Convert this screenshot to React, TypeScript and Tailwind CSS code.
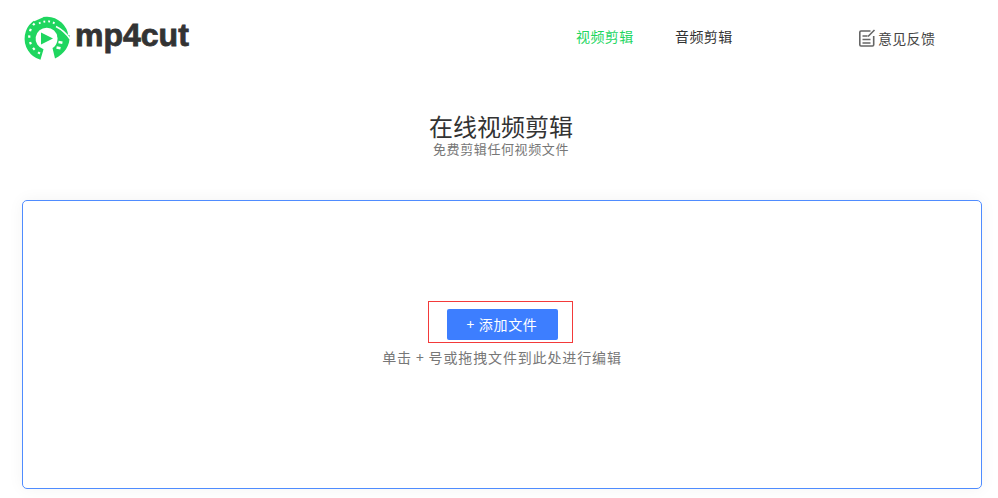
const cjk = "font-['Microsoft_YaHei','Noto_Sans_CJK_SC',sans-serif]";

const Logo = () => (
  <svg width="48" height="44" viewBox="0 0 48 44" className="shrink-0">
    {/* film ring */}
    <path d="M19 38.500A16.500 16.500 0 1 1 40 21" fill="none" stroke="#1fd65f" strokeWidth="11" />
    {/* tail on the right */}
    <path d="M34.500 20 46.500 19C47.500 30 41 38 32 42.500L29.500 32C33 30 35 26 34.500 20Z" fill="#1fd65f" />
    {/* perforations */}
    <path d="M17 37.500A18.800 18.800 0 0 1 12 7" fill="none" stroke="#fff" strokeWidth="2.200" strokeDasharray="2.400 4.200" />
    <path d="M16 7.500A15.500 15.500 0 0 1 34 9" fill="none" stroke="#fff" strokeWidth="2" strokeDasharray="1.800 3" />
    {/* white slashes */}
    <path d="M11 4.500 20 .5" stroke="#fff" strokeWidth="1.500" />
    <path d="M33 10.500C38 13 43 17 47 23" fill="none" stroke="#fff" strokeWidth="1.500" />
    <rect x="35.500" y="25" width="4" height="2.600" fill="#fff" transform="rotate(10 37 26)" />
    <rect x="33.500" y="30.500" width="4" height="2.600" fill="#fff" transform="rotate(10 35 32)" />
    {/* play */}
    <path d="M18 16.500v12l12-6Z" fill="#1fd65f" />
  </svg>
);

const FeedbackIcon = () => (
  <svg width="18" height="18" viewBox="0 0 18 18" fill="none" className="shrink-0">
    <path d="M11.500 2H2A1.200 1.200 0 0 0 .8 3.200v12.600A1.200 1.200 0 0 0 2 17h11.500a1.200 1.200 0 0 0 1.200-1.200V7" stroke="#666" strokeWidth="1.600" />
    <path d="M3.500 7h5M3.500 10.500h8M3.500 14h8" stroke="#666" strokeWidth="1.400" />
    <path d="M9 7.500 15.500 1" stroke="#666" strokeWidth="1.600" />
  </svg>
);

export default function App() {
  return (
    <div className={`w-[998px] h-[498px] overflow-hidden bg-white ${cjk}`}>
      {/* header */}
      <header className="flex items-start h-[80px]">
        <div className="flex items-start ml-[23px] mt-[16px] w-[553px]">
          <Logo />
          <span className="ml-[4px] text-[32px] leading-[38px] font-bold text-[#333] font-['Liberation_Sans',sans-serif] [-webkit-text-stroke:0.8px_#333]">
            mp4cut
          </span>
        </div>
        <nav className="flex mt-[27px] text-sm leading-[18px] tracking-[0.4px]">
          <a className="text-[#22d65f] w-[99px]">视频剪辑</a>
          <a className="text-[#333] w-[184px]">音频剪辑</a>
        </nav>
        <a className="flex items-center mt-[28px] text-sm leading-[20px] text-[#444] tracking-[0.3px]">
          <FeedbackIcon />
          <span className="ml-[1px]">意见反馈</span>
        </a>
      </header>

      {/* title */}
      <div className="flex flex-col items-center mt-[33px] ml-[4px]">
        <h1 className="text-[24px] leading-[26px] font-normal text-[#333]">在线视频剪辑</h1>
        <p className="mt-[3px] text-[13px] leading-[14px] text-[#777] tracking-[0.6px]">免费剪辑任何视频文件</p>
      </div>

      {/* drop zone */}
      <div className="flex flex-col items-center ml-[22px] mt-[44px] w-[960px] h-[289px] border border-[#4f8cff] rounded-[5px] shadow-[0_0_16px_rgba(0,0,0,0.05)] pt-[100px]">
        <div className="flex items-center w-[145px] h-[42px] border border-[#f33a3a] pl-[18px] pt-[4px] mr-[4px]">
          <button className="w-[111px] h-[31px] bg-[#3d7eff] rounded-[2px] text-white text-sm tracking-[0.7px]">+ 添加文件</button>
        </div>
        <p className="mt-[5px] text-sm leading-[18px] text-[#777] tracking-[0.87px]">单击 + 号或拖拽文件到此处进行编辑</p>
      </div>
    </div>
  );
}
